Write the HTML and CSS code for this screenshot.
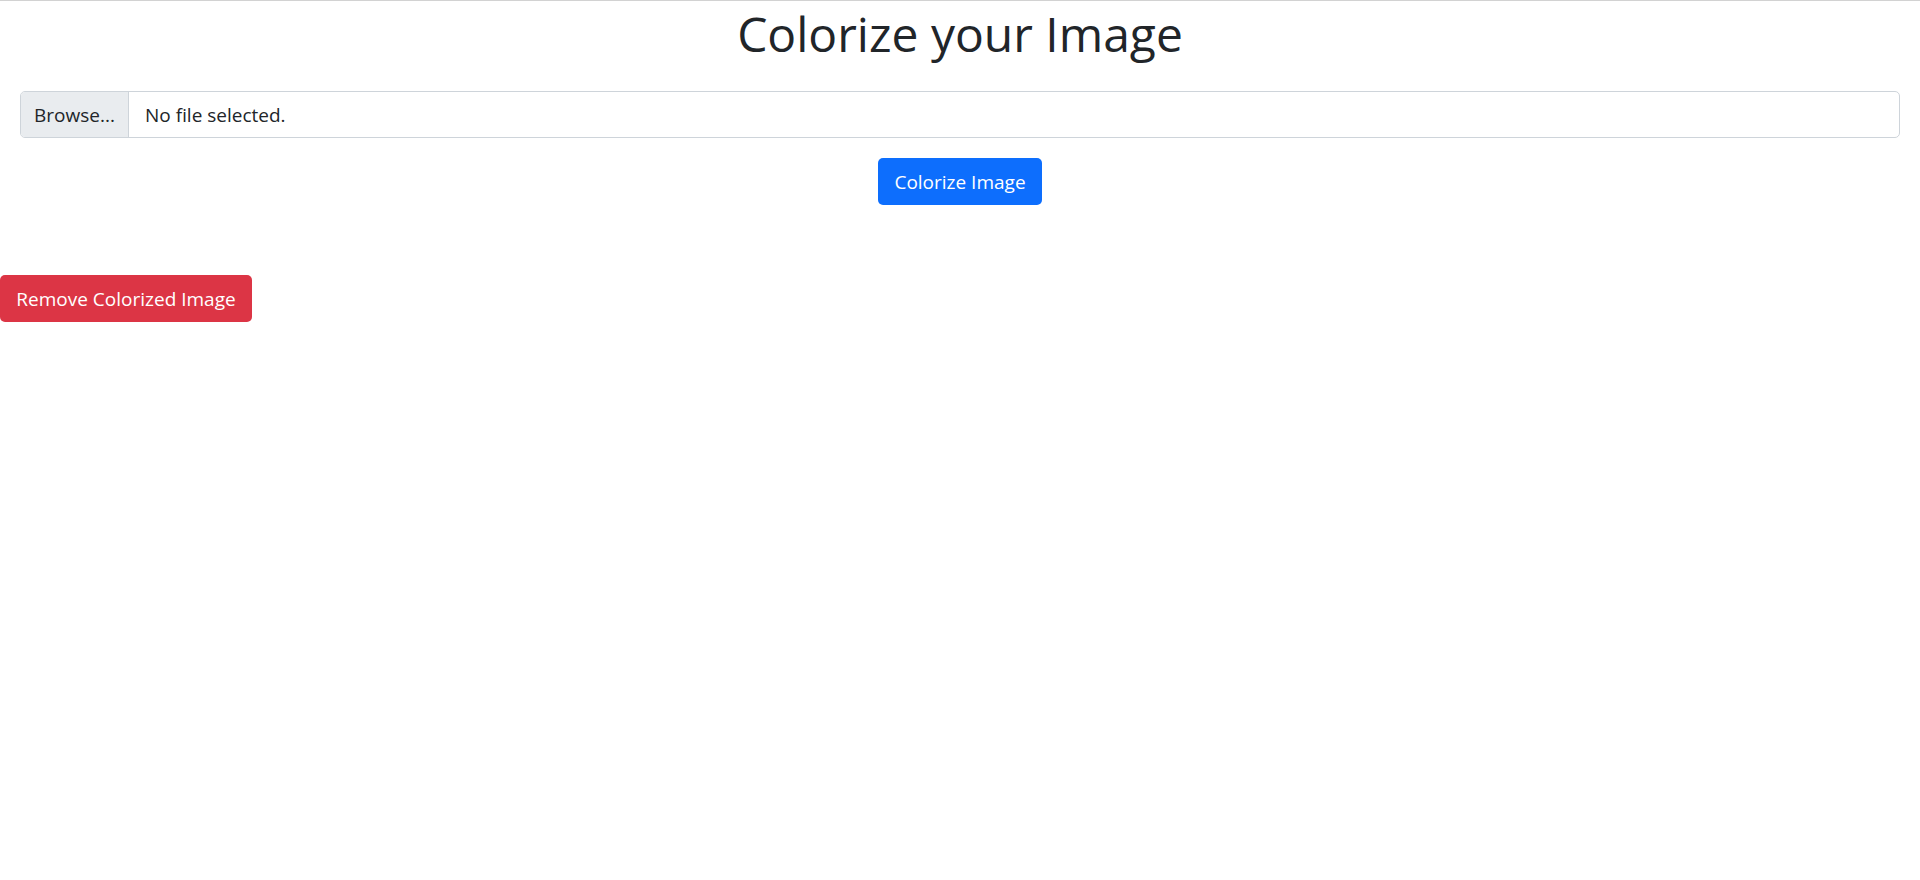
FILE: index.html
```html
<!DOCTYPE html>
<html lang="en">
<head>
<meta charset="utf-8">
<title>Colorize your Image</title>
<link rel="stylesheet" href="styles.css">
</head>
<body>
<h1 class="title">Colorize your Image</h1>
<form class="upload-form">
  <label class="file-input">
    <span class="file-btn">Browse...</span>
    <span class="file-name">No file selected.</span>
  </label>
  <div class="submit-row">
    <button type="button" class="btn btn-primary">Colorize Image</button>
  </div>
</form>
<div class="remove-row">
  <button type="button" class="btn btn-danger btn-remove">Remove Colorized Image</button>
</div>
</body>
</html>
```
FILE: styles.css
```css
html, body { background: #fff; }
body {
  margin: 0;
  border-top: 1px solid #d2d2d2;
  font-family: "Open Sans", "Noto Sans", sans-serif;
  font-size: 19px;
  color: #212529;
}
.title {
  margin: 3px 0 0;
  font-size: 48px;
  font-weight: 400;
  line-height: 60px;
  text-align: center;
}
.upload-form {
  margin-top: 27px;
}
.file-input {
  display: flex;
  align-items: center;
  height: 47px;
  margin: 0 20px;
  border: 1px solid #ced4da;
  border-radius: 5px;
  box-sizing: border-box;
  overflow: hidden;
  background: #fff;
}
.file-btn {
  display: flex;
  align-items: center;
  justify-content: center;
  align-self: stretch;
  width: 108px;
  background: #e9ecef;
  border-right: 1px solid #ced4da;
  box-sizing: border-box;
}
.file-name {
  margin-left: 16px;
}
.submit-row {
  display: flex;
  justify-content: center;
  margin-top: 20px;
}
.btn {
  display: inline-flex;
  align-items: center;
  justify-content: center;
  height: 47px;
  padding: 0;
  border: 0;
  border-radius: 5px;
  font-family: inherit;
  font-size: 19px;
  color: #fff;
}
.btn-primary {
  width: 164px;
  background: #0d6efd;
}
.btn-danger {
  background: #dc3545;
}
.remove-row {
  margin-top: 70px;
}
.btn-remove {
  width: 252px;
}
```
